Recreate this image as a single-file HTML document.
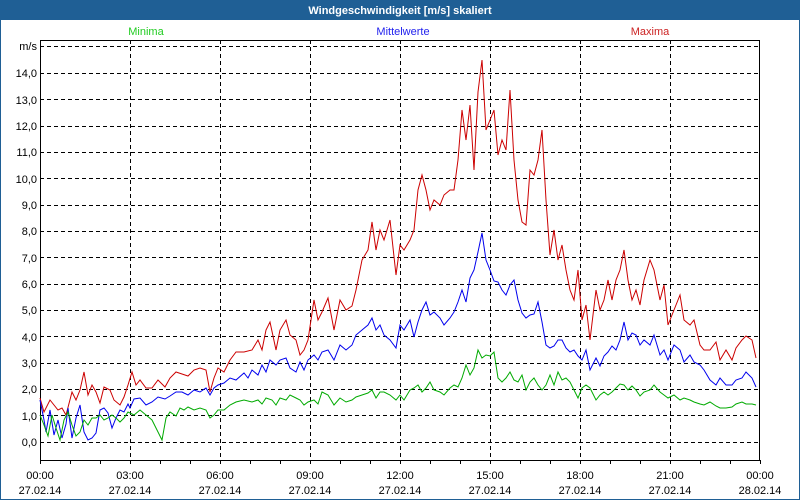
<!DOCTYPE html>
<html><head><meta charset="utf-8"><style>
html,body{margin:0;padding:0;width:800px;height:500px;overflow:hidden;background:#fff}
svg{display:block}
text{font-family:"Liberation Sans",sans-serif;font-size:11px}
</style></head><body>
<svg width="800" height="500" viewBox="0 0 800 500" xmlns="http://www.w3.org/2000/svg">
<rect x="0" y="0" width="800" height="500" fill="#fff"/>
<rect x="0.5" y="0.5" width="799" height="499" fill="none" stroke="#1f5f95"/>
<rect x="0" y="0" width="800" height="20" fill="#1f5f95"/>
<text x="400" y="14" text-anchor="middle" fill="#fff" font-weight="bold">Windgeschwindigkeit [m/s] skaliert</text>
<text x="146" y="35" text-anchor="middle" fill="#22cc22">Minima</text>
<text x="403" y="35" text-anchor="middle" fill="#2222ee">Mittelwerte</text>
<text x="650" y="35" text-anchor="middle" fill="#cc2222">Maxima</text>
<g stroke="#000" stroke-dasharray="4,3" stroke-width="1">
<line x1="40" y1="46.5" x2="760" y2="46.5"/>
<line x1="40" y1="73.5" x2="760" y2="73.5"/>
<line x1="40" y1="99.5" x2="760" y2="99.5"/>
<line x1="40" y1="126.5" x2="760" y2="126.5"/>
<line x1="40" y1="152.5" x2="760" y2="152.5"/>
<line x1="40" y1="178.5" x2="760" y2="178.5"/>
<line x1="40" y1="205.5" x2="760" y2="205.5"/>
<line x1="40" y1="231.5" x2="760" y2="231.5"/>
<line x1="40" y1="257.5" x2="760" y2="257.5"/>
<line x1="40" y1="284.5" x2="760" y2="284.5"/>
<line x1="40" y1="310.5" x2="760" y2="310.5"/>
<line x1="40" y1="336.5" x2="760" y2="336.5"/>
<line x1="40" y1="363.5" x2="760" y2="363.5"/>
<line x1="40" y1="389.5" x2="760" y2="389.5"/>
<line x1="40" y1="415.5" x2="760" y2="415.5"/>
<line x1="40" y1="442.5" x2="760" y2="442.5"/>
<line x1="130.5" y1="40" x2="130.5" y2="460"/>
<line x1="220.5" y1="40" x2="220.5" y2="460"/>
<line x1="310.5" y1="40" x2="310.5" y2="460"/>
<line x1="400.5" y1="40" x2="400.5" y2="460"/>
<line x1="490.5" y1="40" x2="490.5" y2="460"/>
<line x1="580.5" y1="40" x2="580.5" y2="460"/>
<line x1="670.5" y1="40" x2="670.5" y2="460"/>
</g>
<rect x="40.5" y="40.5" width="719" height="420" fill="none" stroke="#000"/>
<g stroke="#000">
<path d="M40.5 460v4M70.5 460v4M100.5 460v4M130.5 460v4M160.5 460v4M190.5 460v4M220.5 460v4M250.5 460v4M280.5 460v4M310.5 460v4M340.5 460v4M370.5 460v4M400.5 460v4M430.5 460v4M460.5 460v4M490.5 460v4M520.5 460v4M550.5 460v4M580.5 460v4M610.5 460v4M640.5 460v4M670.5 460v4M700.5 460v4M730.5 460v4M760.5 460v4"/>
</g>
<g fill="#000" text-anchor="end">
<text x="37" y="50">m/s</text>
<text x="37" y="77">14,0</text><text x="37" y="104">13,0</text><text x="37" y="130">12,0</text>
<text x="37" y="156">11,0</text><text x="37" y="183">10,0</text><text x="37" y="209">9,0</text>
<text x="37" y="235">8,0</text><text x="37" y="262">7,0</text><text x="37" y="288">6,0</text>
<text x="37" y="314">5,0</text><text x="37" y="341">4,0</text><text x="37" y="367">3,0</text>
<text x="37" y="393">2,0</text><text x="37" y="420">1,0</text><text x="37" y="446">0,0</text>
</g>
<g fill="#000" text-anchor="middle">
<text x="40" y="479">00:00</text><text x="40" y="494">27.02.14</text>
<text x="130" y="479">03:00</text><text x="130" y="494">27.02.14</text>
<text x="220" y="479">06:00</text><text x="220" y="494">27.02.14</text>
<text x="310" y="479">09:00</text><text x="310" y="494">27.02.14</text>
<text x="400" y="479">12:00</text><text x="400" y="494">27.02.14</text>
<text x="490" y="479">15:00</text><text x="490" y="494">27.02.14</text>
<text x="580" y="479">18:00</text><text x="580" y="494">27.02.14</text>
<text x="670" y="479">21:00</text><text x="670" y="494">27.02.14</text>
<text x="760" y="479">00:00</text><text x="760" y="494">28.02.14</text>
</g>
<polyline fill="none" stroke="#cc0000" points="40,398 44,412 50,400 58,410 62,408 66,415 72,392 76,400 80,390 84,372 88,395 92,385 96,392 100,403 104,387 110,390 114,400 120,405 124,397 128,385 132,372 136,385 140,380 146,388 152,388 158,380 165,387 170,378 176,372 182,374 188,376 194,370 200,368 206,370 210,392 214,378 218,368 224,372 230,360 236,352 244,352 252,350 258,340 262,350 266,330 270,322 276,350 280,330 286,320 290,335 296,340 300,355 304,350 308,340 314,300 318,320 322,312 328,298 334,330 340,300 346,310 352,306 356,290 362,260 368,250 372,222 376,250 380,230 384,240 390,220 396,275 400,245 404,250 410,240 414,230 418,190 422,175 426,190 430,210 434,200 440,205 444,195 450,190 454,190 458,160 462,110 466,140 470,105 474,170 478,92 482,60 486,130 490,120 494,110 498,155 502,140 506,150 510,90 514,160 518,200 522,222 526,225 530,170 534,175 538,160 542,130 546,200 550,255 554,230 558,260 562,245 566,270 570,290 574,300 578,270 582,320 586,305 590,340 596,290 600,310 604,300 608,280 612,300 616,280 620,270 624,250 628,280 632,300 636,290 640,305 644,280 650,260 654,270 660,300 664,285 668,325 674,310 680,295 684,320 690,325 694,320 700,345 704,350 710,350 716,342 720,360 726,350 732,360 736,348 742,340 746,336 752,340 756,358"/>
<polyline fill="none" stroke="#0000ee" points="40,400 44,420 46,432 50,410 54,435 58,420 62,438 66,424 68,408 72,438 76,418 80,405 84,432 88,440 92,438 96,433 100,410 104,408 108,413 112,428 116,418 120,410 124,412 128,404 130,408 134,399 140,398 146,405 152,402 158,397 165,399 170,396 176,392 182,392 188,395 194,390 200,392 206,388 210,395 214,388 218,385 224,383 230,378 236,380 244,373 248,378 252,370 258,375 262,365 266,372 270,360 276,365 280,360 286,358 290,368 296,372 300,362 304,370 308,360 314,355 318,360 322,352 328,350 334,360 340,345 346,350 352,345 356,335 362,330 368,325 372,318 376,330 380,325 384,335 390,340 396,348 400,325 404,330 410,320 414,337 418,322 422,310 426,302 430,315 434,312 440,318 444,325 450,318 454,312 458,302 462,290 466,302 470,278 474,270 478,252 482,233 486,260 490,270 494,281 498,282 502,290 506,295 510,285 514,280 518,300 522,313 526,318 530,315 534,314 538,302 542,322 546,345 550,348 554,346 558,340 562,340 566,348 570,352 574,350 578,356 582,360 586,350 590,370 596,358 600,366 604,356 608,352 612,346 616,350 620,340 624,322 628,340 632,333 636,335 640,345 644,340 650,345 654,335 660,355 664,350 668,360 674,345 680,350 684,362 690,355 694,362 700,365 704,370 710,380 716,385 720,378 726,385 732,385 736,380 742,378 746,372 752,378 756,387"/>
<polyline fill="none" stroke="#00aa00" points="40,415 44,425 48,436 52,415 56,428 60,440 64,420 68,412 72,425 76,436 80,432 84,420 88,425 92,418 96,418 100,415 104,420 108,418 112,415 116,418 120,422 124,418 128,412 134,415 140,410 146,415 152,420 158,432 162,440 166,418 170,412 176,416 180,408 184,410 188,407 194,410 200,408 206,410 210,418 214,415 218,410 224,410 230,405 236,402 244,400 252,402 258,400 262,404 266,398 272,400 276,405 280,398 286,400 290,395 296,398 300,400 304,405 308,402 314,400 318,404 322,392 328,395 334,405 340,398 346,402 352,400 356,397 362,395 368,393 372,390 376,398 380,392 384,392 390,395 396,400 400,395 404,400 410,390 414,388 418,385 422,392 426,388 430,382 434,390 440,392 444,395 450,388 454,385 458,387 462,378 466,365 470,375 474,368 478,350 482,358 486,355 490,356 494,352 498,378 502,382 506,378 510,372 514,380 518,382 522,375 526,390 530,382 534,378 538,385 542,390 546,385 550,375 554,385 558,372 562,380 566,378 570,382 574,390 578,398 582,388 586,385 590,388 596,400 600,395 604,392 608,395 612,392 616,388 620,384 624,385 628,390 632,386 636,390 640,396 644,392 650,390 654,385 660,392 664,395 668,398 674,395 680,400 684,398 690,400 694,402 700,404 704,405 710,402 716,406 720,408 726,408 732,407 736,404 742,402 746,404 752,404 756,405"/>
</svg>
</body></html>
